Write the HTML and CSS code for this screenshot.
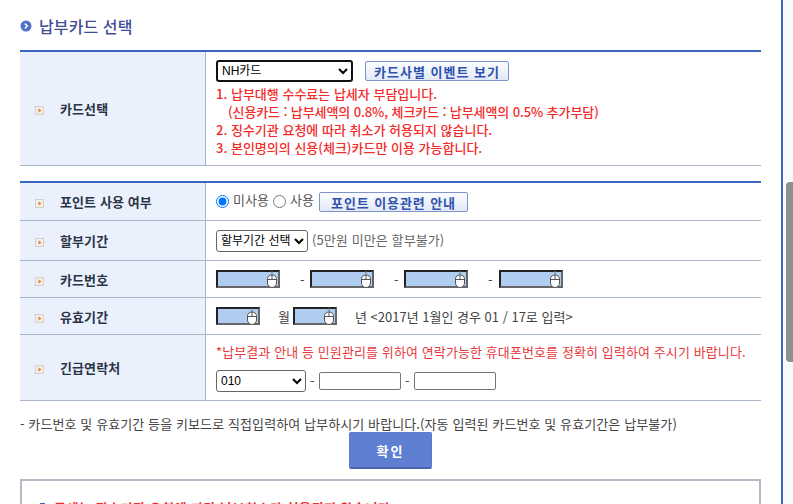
FILE: index.html
```html
<!doctype html>
<html lang="ko">
<head>
    <meta charset="UTF-8">
    <meta name="viewport" content="width=device-width, initial-scale=1.0">
    <title>납부카드 선택</title>
    <link rel="stylesheet" href="styles.css">
</head>
<body>
    <svg class="defs" width="0" height="0">
        <symbol id="mouse" viewBox="0 0 12 18">
            <path d="M6 1V5" fill="none" stroke="#777"/>
            <path d="M1.500 9C1.500 6.500 3.500 5 6 5S10.500 6.500 10.500 9V13C10.500 15.500 8.500 17.500 6 17.500S1.500 15.500 1.500 13Z" fill="#fff" stroke="#555"/>
            <path d="M1.500 9.500H10.500M6 5V9.500" fill="none" stroke="#555"/>
        </symbol>
        <symbol id="arrow" viewBox="0 0 9 9">
            <rect width="9" height="9" fill="#d2d0cc"/>
            <rect x="1" y="1" width="7" height="7" fill="#f3eee7"/>
            <path d="M3.500 2.500L6.500 4.500L3.500 6.500Z" fill="#ec7a2c"/>
        </symbol>
    </svg>

    <div class="page">
        <h2 class="title">
            <svg class="title-icon" width="12" height="12" viewBox="0 0 12 12">
                <circle cx="6" cy="6" r="5.500" fill="#4f72c8"/>
                <path d="M4.800 3.500L7.300 6L4.800 8.500" fill="none" stroke="#fff" stroke-width="1.500"/>
            </svg>
            납부카드 선택
        </h2>

        <table class="form-table first">
            <tr class="row-card">
                <th><svg class="bullet"><use href="#arrow"/></svg>카드선택</th>
                <td>
                    <div class="card-select">
                        <select class="select-card">
                            <option>NH카드</option>
                        </select>
                        <button type="button" class="btn-small btn-event">카드사별 이벤트 보기</button>
                    </div>
                    <ol class="notice">
                        <li>1. 납부대행 수수료는 납세자 부담입니다.</li>
                        <li class="indent">(신용카드 : 납부세액의 0.8%, 체크카드 : 납부세액의 0.5% 추가부담)</li>
                        <li>2. 징수기관 요청에 따라 취소가 허용되지 않습니다.</li>
                        <li>3. 본인명의의 신용(체크)카드만 이용 가능합니다.</li>
                    </ol>
                </td>
            </tr>
        </table>

        <table class="form-table second">
            <tr class="row-point">
                <th><svg class="bullet"><use href="#arrow"/></svg>포인트 사용 여부</th>
                <td>
                    <div class="inline">
                        <input type="radio" name="point" id="p1" checked>
                        <label for="p1">미사용</label>
                        <input type="radio" name="point" id="p2">
                        <label for="p2">사용</label>
                        <button type="button" class="btn-small btn-point">포인트 이용관련 안내</button>
                    </div>
                </td>
            </tr>
            <tr class="row-plan">
                <th><svg class="bullet"><use href="#arrow"/></svg>할부기간</th>
                <td>
                    <div class="inline">
                        <select class="select-plan">
                            <option>할부기간 선택</option>
                        </select>
                        <span class="hint">(5만원 미만은 할부불가)</span>
                    </div>
                </td>
            </tr>
            <tr class="row-num">
                <th><svg class="bullet"><use href="#arrow"/></svg>카드번호</th>
                <td>
                    <div class="inline">
                        <span class="secure"><input type="text"><svg class="mouse"><use href="#mouse"/></svg></span>
                        <span class="dash">-</span>
                        <span class="secure"><input type="text"><svg class="mouse"><use href="#mouse"/></svg></span>
                        <span class="dash">-</span>
                        <span class="secure"><input type="text"><svg class="mouse"><use href="#mouse"/></svg></span>
                        <span class="dash last">-</span>
                        <span class="secure"><input type="text"><svg class="mouse"><use href="#mouse"/></svg></span>
                    </div>
                </td>
            </tr>
            <tr class="row-exp">
                <th><svg class="bullet"><use href="#arrow"/></svg>유효기간</th>
                <td>
                    <div class="inline">
                        <span class="secure short"><input type="text"><svg class="mouse"><use href="#mouse"/></svg></span>
                        <span class="unit-month">월</span>
                        <span class="secure short"><input type="text"><svg class="mouse"><use href="#mouse"/></svg></span>
                        <span class="unit-year">년 &lt;2017년 1월인 경우 01 / 17로 입력&gt;</span>
                    </div>
                </td>
            </tr>
            <tr class="row-tel">
                <th><svg class="bullet"><use href="#arrow"/></svg>긴급연락처</th>
                <td>
                    <p class="tel-note">*납부결과 안내 등 민원관리를 위하여 연락가능한 휴대폰번호를 정확히 입력하여 주시기 바랍니다.</p>
                    <div class="inline tel">
                        <select class="select-tel">
                            <option>010</option>
                        </select>
                        <span class="tel-dash">-</span>
                        <input type="text" class="input-tel">
                        <span class="tel-dash">-</span>
                        <input type="text" class="input-tel">
                    </div>
                </td>
            </tr>
        </table>

        <p class="desc">- 카드번호 및 유효기간 등을 키보드로 직접입력하여 납부하시기 바랍니다.(자동 입력된 카드번호 및 유효기간은 납부불가)</p>

        <div class="actions">
            <button type="button" class="btn-ok">확인</button>
        </div>

        <div class="info-box">
            <p><span class="square"></span>국세는 징수기관 요청에 따라 납부취소가 허용되지 않습니다.</p>
        </div>
    </div>

    <div class="scroll-track"></div>
    <div class="side-line"></div>
    <div class="scroll-thumb"></div>
</body>
</html>
```

FILE: styles.css
```css
html, body {
    margin: 0;
    padding: 0;
    height: 504px;
    overflow: hidden;
    background: #fff;
}

body {
    font-family: "Noto Sans CJK KR", "Liberation Sans", sans-serif;
    font-size: 13px;
    letter-spacing: 0.1px;
    color: #444;
}

.defs {
    position: absolute;
}

.page {
    width: 741px;
    margin-left: 20px;
}

.title {
    display: flex;
    align-items: center;
    gap: 7px;
    height: 50px;
    margin: 0;
    padding-top: 1px;
    box-sizing: border-box;
    font-size: 16px;
    font-weight: 500;
    color: #3f4d96;
}

.form-table {
    width: 741px;
    table-layout: fixed;
    border-collapse: separate;
    border-spacing: 0;
    border-top: 2px solid #3a66c0;
}

.form-table.second {
    margin-top: 15px;
}

.form-table th {
    width: 186px;
    padding: 0 0 0 15px;
    box-sizing: border-box;
    background: #eaf1fd;
    border-right: 1px solid #a9b5c8;
    border-bottom: 1px solid #a9b5c8;
    text-align: left;
    font-size: 13px;
    font-weight: 700;
    color: #2a3447;
}

.form-table td {
    padding: 0 0 0 10px;
    border-bottom: 1px solid #a9b5c8;
}

.bullet {
    width: 9px;
    height: 9px;
    margin-right: 16px;
    vertical-align: -1px;
}

.row-card { height: 114px; }
.row-point { height: 38px; }
.row-plan { height: 40px; }
.row-num { height: 37px; }
.row-exp { height: 37px; }
.row-tel { height: 66px; }

.card-select {
    display: flex;
    align-items: center;
    gap: 12px;
}

select {
    font-family: "Liberation Sans", "Noto Sans CJK KR", sans-serif;
    font-size: 12px;
    letter-spacing: 0;
    color: #000;
    background: #fff;
    box-sizing: border-box;
    padding: 0;
}

.select-card {
    width: 137px;
    height: 22px;
    border: 2px solid #111;
    border-radius: 3px;
}

.btn-small {
    height: 20px;
    padding: 0;
    box-sizing: border-box;
    border: 1px solid #7f92c9;
    border-radius: 2px;
    background: linear-gradient(#fbfcff, #e3e9f8);
    font-family: "Noto Sans CJK KR", sans-serif;
    font-size: 13px;
    font-weight: 700;
    color: #2f53ad;
}

.btn-event {
    width: 144px;
    letter-spacing: 1px;
}

.btn-point {
    flex: none;
    width: 149px;
    margin-left: 1px;
    letter-spacing: 0.9px;
}

.notice {
    margin: 3px 0 0;
    padding: 0;
    list-style: none;
    font-size: 13px;
    font-weight: 500;
    line-height: 18px;
    letter-spacing: 0;
    color: #f32b2b;
}

.notice .indent {
    padding-left: 12px;
    letter-spacing: -0.1px;
}

.inline {
    display: flex;
    align-items: center;
}

input[type="radio"] {
    flex: none;
    width: 13px;
    height: 13px;
    margin: 0 4px 0 0;
}

.row-point label {
    width: 40px;
    margin-top: -4px;
    color: #555;
}

.row-point label[for="p2"] {
    width: 28px;
}

.select-plan {
    width: 92px;
    height: 22px;
    border: 1px solid #666;
    border-radius: 3px;
}

.hint {
    margin: -2px 0 0 4px;
    color: #666;
}

.dash {
    width: 30px;
    padding-left: 20px;
    box-sizing: border-box;
}

.dash.last {
    width: 31px;
}

.secure {
    position: relative;
    display: block;
    flex: none;
    width: 64px;
    height: 18px;
}

.secure.short {
    width: 44px;
}

.secure input {
    display: block;
    width: 100%;
    height: 100%;
    margin: 0;
    padding: 0;
    box-sizing: border-box;
    border-width: 2px;
    border-style: solid;
    border-color: #222 #666 #666 #222;
    background: #afcdf0;
}

.mouse {
    position: absolute;
    right: 2px;
    top: 0;
    width: 12px;
    height: 18px;
}

.unit-month {
    width: 33px;
    padding-left: 18px;
    box-sizing: border-box;
}

.unit-year {
    margin-left: 18px;
    letter-spacing: 0;
}

.tel-note {
    margin: 0 0 10px;
    line-height: 16px;
    color: #e8383c;
    font-size: 13px;
}

.tel {
    gap: 4px;
}

.tel-dash {
    width: 5px;
}

.select-tel {
    width: 90px;
    height: 22px;
    border: 1px solid #666;
    border-radius: 3px;
}

.input-tel {
    width: 82px;
    height: 18px;
    margin: 0;
    padding: 0;
    box-sizing: border-box;
    border: 1px solid #767676;
    border-radius: 2px;
}

.desc {
    margin: 14px 0 0;
    line-height: 18px;
    color: #444;
}

.actions {
    display: flex;
    justify-content: center;
    margin-top: -1px;
}

.btn-ok {
    width: 83px;
    height: 37px;
    padding: 0;
    border: 1px solid #5c7bc9;
    border-bottom: 2px solid #4a66ad;
    border-radius: 2px;
    background: #5e7fd2;
    font-family: "Noto Sans CJK KR", sans-serif;
    font-size: 13px;
    font-weight: 700;
    letter-spacing: 2px;
    color: #fff;
}

.info-box {
    height: 60px;
    margin-top: 10px;
    padding: 17px 18px;
    box-sizing: border-box;
    border: 2px solid #b6bac8;
}

.info-box p {
    margin: 0;
    font-size: 13px;
    font-weight: 700;
    letter-spacing: 0.5px;
    color: #f32b2b;
}

.square {
    display: inline-block;
    width: 5px;
    height: 5px;
    margin-right: 9px;
    vertical-align: 5px;
    background: #3a66c0;
}

.scroll-track {
    position: absolute;
    left: 783px;
    top: 0;
    width: 10px;
    height: 504px;
    background: #fafafa;
}

.side-line {
    position: absolute;
    left: 781px;
    top: 0;
    width: 2px;
    height: 504px;
    background: #3a66c0;
}

.scroll-thumb {
    position: absolute;
    left: 786px;
    top: 182px;
    width: 7px;
    height: 180px;
    border-radius: 4px 0 0 4px;
    background: #8f8f8f;
}
```
